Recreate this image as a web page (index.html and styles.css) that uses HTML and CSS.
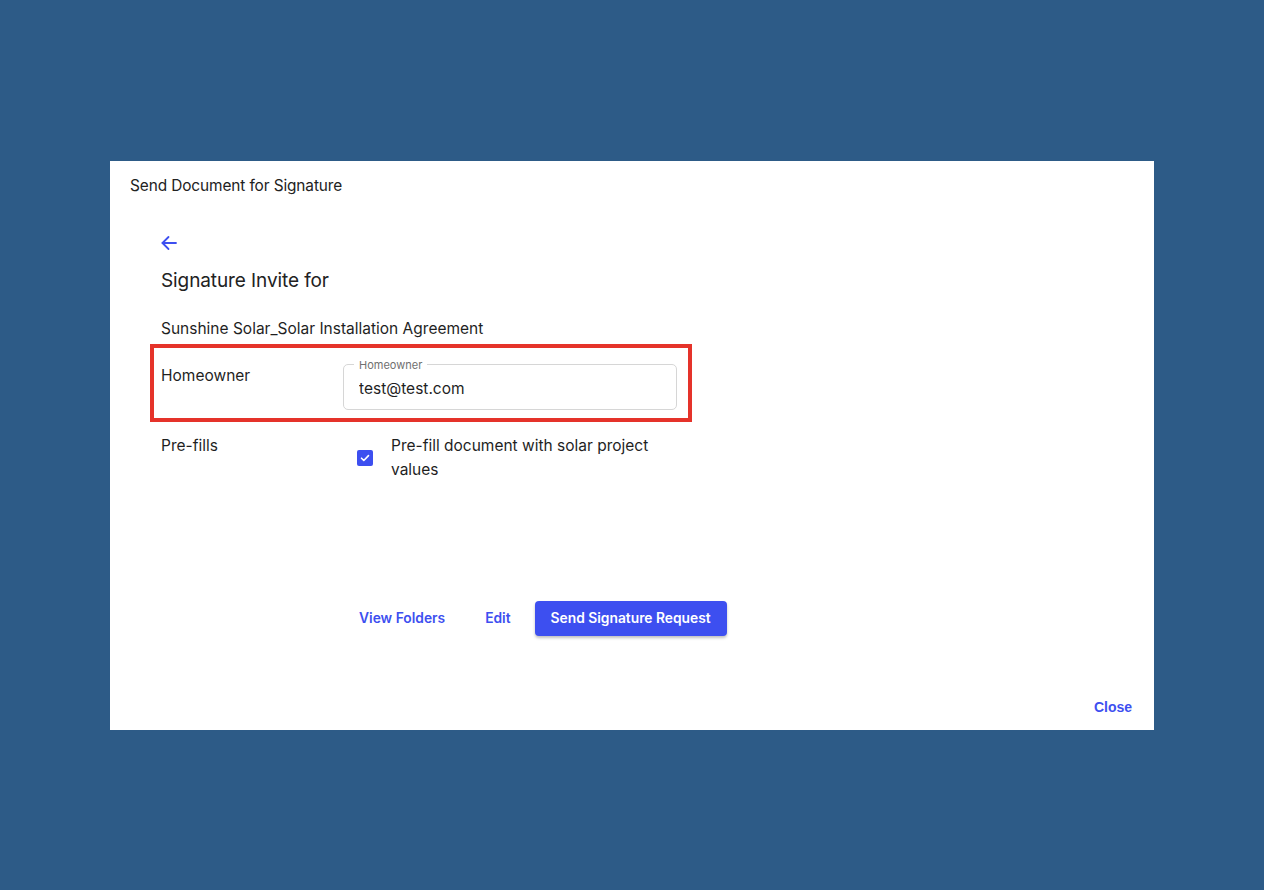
FILE: index.html
```html
<!DOCTYPE html>
<html lang="en">
<head>
  <meta charset="UTF-8" />
  <meta name="viewport" content="width=device-width, initial-scale=1" />
  <title>Send Document for Signature</title>
  <link rel="stylesheet" href="styles.css">
</head>
<body>
  <div class="dialog">
    <div class="dialog-title">Send Document for Signature</div>

    <div class="dialog-body">
      <button class="back-btn" type="button" aria-label="Back">
        <svg width="18" height="18" viewBox="0 0 18 18" fill="none" stroke="currentColor" stroke-width="1.8" stroke-linecap="round" stroke-linejoin="round">
          <path d="M16 9H2.5"/>
          <path d="M8.5 3L2.5 9l6 6"/>
        </svg>
      </button>
      <h2 class="invite-title">Signature Invite for</h2>
      <p class="doc-name">Sunshine Solar_Solar Installation Agreement</p>

      <div class="field-row highlight">
        <div class="field-label">Homeowner</div>
        <div class="outlined">
          <span class="outlined-legend">Homeowner</span>
          <input type="email" value="test@test.com">
        </div>
      </div>

      <div class="field-row prefill-row">
        <div class="field-label">Pre-fills</div>
        <label class="check">
          <span class="check-box">
            <svg width="12" height="12" viewBox="0 0 12 12" fill="none" stroke="#fff" stroke-width="1.6" stroke-linecap="round" stroke-linejoin="round">
              <path d="M2.5 6.2l2.3 2.3 4.7-4.9"/>
            </svg>
          </span>
          <span class="check-text">Pre-fill document with solar project values</span>
        </label>
      </div>

      <div class="actions">
        <button class="text-btn" type="button">View Folders</button>
        <button class="text-btn" type="button">Edit</button>
        <button class="primary-btn" type="button">Send Signature Request</button>
      </div>
    </div>

    <div class="dialog-footer">
      <button class="close-btn" type="button">Close</button>
    </div>
  </div>
</body>
</html>
```

FILE: styles.css
```css
html, body { margin: 0; height: 100%; }
body { background: #2d5b87; font-family: Inter, "Noto Sans", sans-serif; color: #1f1f1f; display: flex; align-items: center; justify-content: center; }

.dialog { width: 1044px; height: 569px; background: #fff; display: flex; flex-direction: column; box-sizing: border-box; }
.dialog-title { padding: 13px 20px 0; font-size: 15.4px; line-height: 24px; letter-spacing: -0.1px; color: #222; }

.dialog-body { flex: 1; padding: 0 51px; display: flex; flex-direction: column; }
.back-btn { width: 18px; height: 18px; margin: 36px 0 0 -1px; padding: 0; border: none; background: none; color: #3d4ff0; cursor: pointer; display: flex; }
.invite-title { margin: 15px 0 0; font-size: 19px; line-height: 28px; font-weight: 400; letter-spacing: -0.1px; color: #222; }
.doc-name { margin: 22px 0 0; font-size: 15.5px; line-height: 24px; }

.field-row { display: flex; }
.field-label { width: 182px; flex-shrink: 0; font-size: 15.5px; line-height: 24px; }

.highlight { width: 542px; box-sizing: border-box; margin: 3px 0 0 -11px; padding: 16px 11px 8px 7px; border: 4px solid #e5332a; }

.outlined { position: relative; width: 334px; height: 46px; box-sizing: border-box; border: 1px solid #d6d6d6; border-radius: 5px; }
.outlined-legend { position: absolute; top: -7px; left: 10px; padding: 0 5px; background: #fff; font-size: 11px; line-height: 14px; color: #707070; }
.outlined input { width: 100%; height: 100%; box-sizing: border-box; border: none; outline: none; background: none; padding: 3px 15px 0; font: 15.5px Inter, sans-serif; color: #1f1f1f; }

.prefill-row { margin-top: 12px; }
.check { display: flex; align-items: center; width: 334px; cursor: pointer; }
.check-box { width: 16px; height: 16px; margin-left: 14px; flex-shrink: 0; border-radius: 2px; background: #3d4ff0; display: flex; align-items: center; justify-content: center; }
.check-text { margin-left: 18px; font-size: 15.5px; line-height: 24px; width: 270px; }

.actions { display: flex; gap: 8px; margin: 119px 0 0 182px; align-items: center; }
.text-btn, .primary-btn { height: 35px; padding: 0 16px; border: none; border-radius: 4px; font: 600 13.8px Inter, sans-serif; cursor: pointer; }
.text-btn { background: none; color: #3d4ff0; }
.primary-btn { background: #3d4ff0; color: #fff; box-shadow: 0 2px 3px rgba(0, 0, 0, 0.25); }

.dialog-footer { display: flex; justify-content: flex-end; padding: 0 14px 8px; }
.close-btn { height: 30px; padding: 0 8px; border: none; background: none; color: #3d4ff0; font: bold 14px "Liberation Sans", Arial, sans-serif; cursor: pointer; }
```
